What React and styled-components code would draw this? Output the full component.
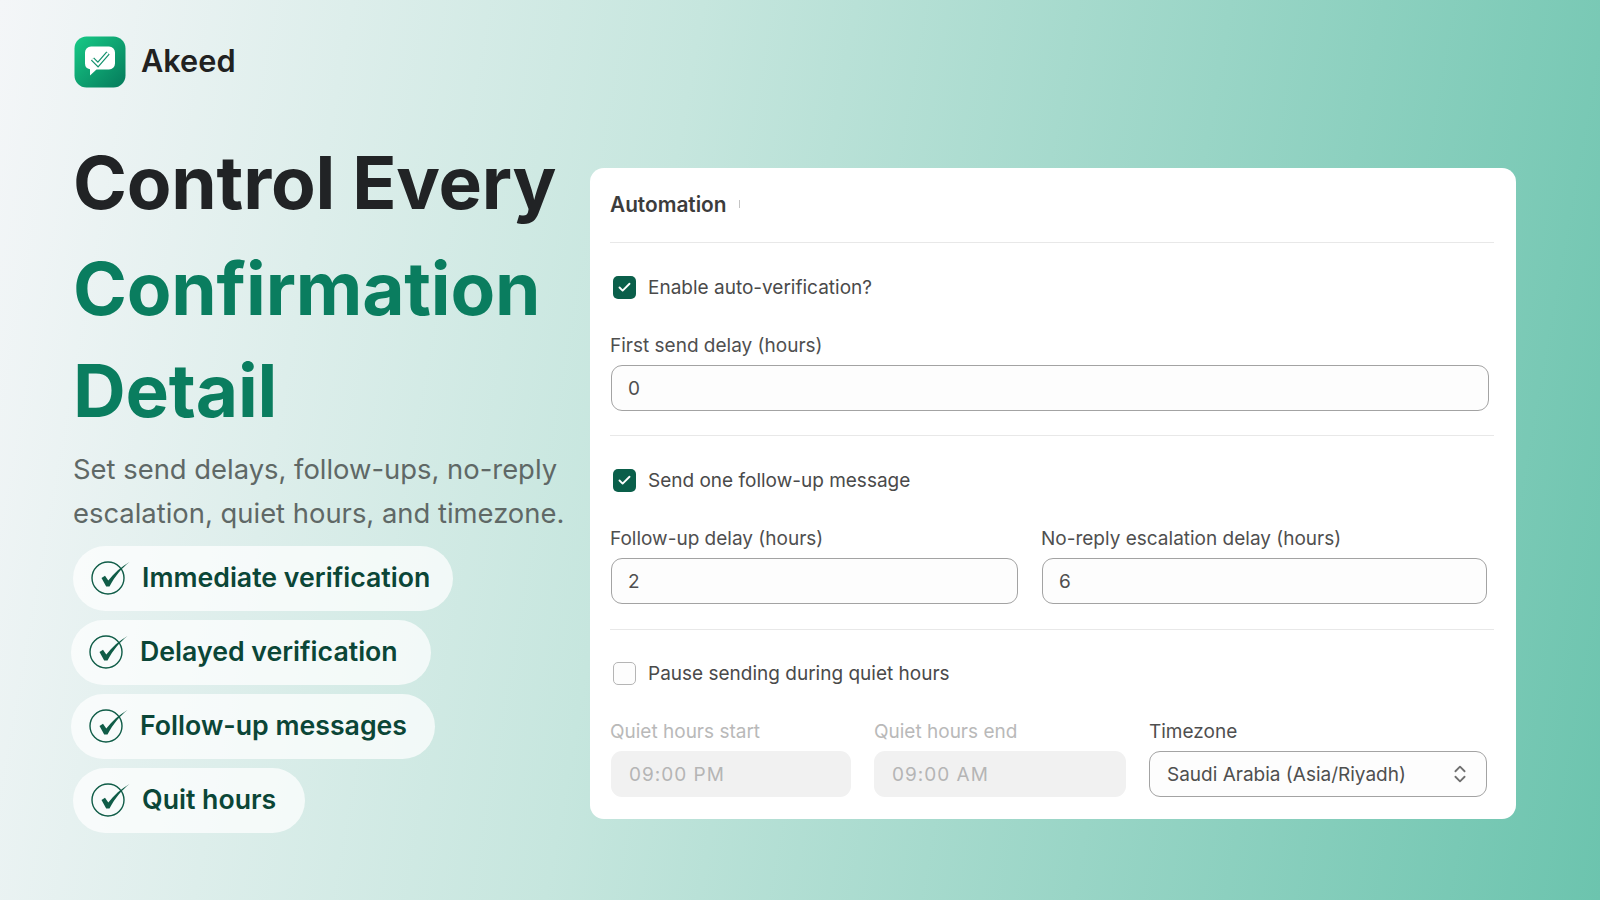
import React from 'react'
import styled, { createGlobalStyle } from 'styled-components'
import { Check, ChevronsUpDown } from 'lucide-react'

const Global = createGlobalStyle`
  html, body { margin: 0; padding: 0; }
  body { font-family: Inter, "Liberation Sans", sans-serif; overflow: hidden; }
`

const Page = styled.div`
  width: 1600px;
  height: 900px;
  display: flex;
  box-sizing: border-box;
  padding: 36px 0 0 0;
  background: linear-gradient(100deg, #f4f6f8 0%, #c6e6de 40%, #6cc4ae 100%);
`

const Left = styled.div`
  width: 590px;
  flex: none;
  padding-left: 73px;
  box-sizing: border-box;
`

const Brand = styled.div`
  display: flex;
  align-items: center;
  gap: 15px;
  height: 52px;
  margin-left: 1px;
  font-size: 30.7px;
  font-weight: 600;
  color: #212121;
`

const BrandName = styled.span`
  margin-bottom: 3px;
`

const Title = styled.h1`
  margin: 43px 0 0;
  font-size: 73px;
  font-weight: 700;
  line-height: 104px;
  color: #212325;
  letter-spacing: -0.2px;
  white-space: nowrap;
`

const Green = styled.span`
  display: block;
  margin-top: ${p => p.$nudge}px;
  color: #0a7d5f;
`

const Sub = styled.p`
  margin: 4px 0 0;
  font-size: 27.4px;
  line-height: 44px;
  color: #5f6866;
  white-space: nowrap;
`

const Pills = styled.div`
  margin-top: 11px;
  display: flex;
  flex-direction: column;
  align-items: flex-start;
  gap: 9px;
`

const Pill = styled.div`
  display: flex;
  align-items: center;
  gap: 11px;
  height: 65px;
  box-sizing: border-box;
  padding: 0 ${p => p.$right}px 3px 18px;
  margin-left: ${p => p.$shift || 0}px;
  border-radius: 33px;
  background: rgba(255, 255, 255, 0.72);
  font-size: 26.7px;
  font-weight: 600;
  color: #0b4637;
`

const Card = styled.section`
  width: 926px;
  height: 651px;
  flex: none;
  margin-top: 132px;
  box-sizing: border-box;
  padding: 0 22px 0 20px;
  background: #fff;
  border-radius: 14px;
`

const CardHead = styled.div`
  height: 75px;
  display: flex;
  align-items: center;
  gap: 12px;
  box-sizing: border-box;
  padding-bottom: 2px;
  border-bottom: 1px solid #e8e8e8;
  font-size: 20.8px;
  font-weight: 600;
  color: #3c3c3c;
`

const Tick = styled.span`
  width: 1px;
  height: 8px;
  background: #c4c4c4;
`

const Group = styled.div`
  padding-top: ${p => p.$top}px;
  height: ${p => p.$h}px;
  box-sizing: border-box;
  border-bottom: ${p => (p.$last ? 'none' : '1px solid #e8e8e8')};
`

const CheckRow = styled.div`
  display: flex;
  align-items: center;
  gap: 12px;
  padding-left: 3px;
  height: 23px;
  font-size: 19px;
  color: #4a4a4a;
`

const Box = styled.span`
  width: 23px;
  height: 23px;
  flex: none;
  box-sizing: border-box;
  display: flex;
  align-items: center;
  justify-content: center;
  border-radius: 5px;
  color: #fff;
  background: ${p => (p.$on ? '#0a5f4a' : '#fdfdfd')};
  border: ${p => (p.$on ? 'none' : '1.5px solid #b5b5b5')};
`

const Fields = styled.div`
  margin-top: 35px;
  display: flex;
  gap: 23px;
`

const Field = styled.div`
  width: ${p => p.$w}px;
  flex: none;
`

const Label = styled.div`
  height: 24px;
  line-height: 24px;
  margin-bottom: 7px;
  font-size: 19px;
  color: ${p => (p.$off ? '#b9b9b9' : '#4f4f4f')};
  white-space: nowrap;
`

const Input = styled.div`
  height: 46px;
  box-sizing: border-box;
  display: flex;
  align-items: center;
  justify-content: space-between;
  margin-left: ${p => (p.$inset ? 1 : 0)}px;
  padding: 0 15px 0 ${p => (p.$off ? 18 : p.$inset ? 16 : 17)}px;
  border-radius: 11px;
  font-size: 19px;
  white-space: nowrap;
  color: ${p => (p.$off ? '#b5b5b5' : '#4f4f4f')};
  background: ${p => (p.$off ? '#f1f1f1' : '#fdfdfd')};
  border: ${p => (p.$off ? 'none' : '1.5px solid #a3a3a3')};
  letter-spacing: ${p => (p.$off ? '1px' : '0')};
`

const Logo = () => (
  <svg width="52" height="52" viewBox="0 0 52 52">
    <defs>
      <linearGradient id="logoFill" x1="0" y1="0" x2="1" y2="1">
        <stop offset="0" stopColor="#17ca86" />
        <stop offset="1" stopColor="#057a5b" />
      </linearGradient>
    </defs>
    <rect x="0.5" y="0.5" width="51" height="51" rx="12" fill="url(#logoFill)" />
    <path d="M17 10.5h18a6 6 0 0 1 6 6v11a6 6 0 0 1-6 6H22.5l-6.5 6v-6.2a6 6 0 0 1-5-5.8v-11a6 6 0 0 1 6-6z" fill="#fff" />
    <path d="M18.5 23l5.5 5.5 10-11.5" fill="none" stroke="#12906c" strokeWidth="4.4" strokeLinejoin="miter" />
    <path d="M18.5 23l5.5 5.5 10-11.5" fill="none" stroke="#fff" strokeWidth="2" strokeLinejoin="miter" />
  </svg>
)

const CircleCheck = () => (
  <svg width="40" height="36" viewBox="0 0 40 36" style={{ flex: 'none' }}>
    <circle cx="17" cy="19" r="16" fill="none" stroke="#0f5c47" strokeWidth="1.4" />
    <path d="M10.5 19L14 16.7l3.3 4.8C23 14 30 8 38.5 3 31 9 24 17 18.5 27.5h-3.3z" fill="#0f5c47" />
  </svg>
)

const pills = [
  ['Immediate verification', 0, 23],
  ['Delayed verification', -2, 33],
  ['Follow-up messages', -2, 28],
  ['Quit hours', 0, 29],
]

const App = () => (
  <Page>
    <Global />
    <Left>
      <Brand><Logo /><BrandName>Akeed</BrandName></Brand>
      <Title>
        Control Every
        <Green $nudge={2}>Confirmation</Green>
        <Green $nudge={-2}>Detail</Green>
      </Title>
      <Sub>
        Set send delays, follow-ups, no-reply<br />
        escalation, quiet hours, and timezone.
      </Sub>
      <Pills>
        {pills.map(([text, shift, right]) => (
          <Pill key={text} $shift={shift} $right={right}><CircleCheck />{text}</Pill>
        ))}
      </Pills>
    </Left>
    <Card>
      <CardHead>Automation<Tick /></CardHead>
      <Group $h={193} $top={33}>
        <CheckRow><Box $on><Check size={15} strokeWidth={3} /></Box>Enable auto-verification?</CheckRow>
        <Fields>
          <Field $w={879}>
            <Label>First send delay (hours)</Label>
            <Input $inset>0</Input>
          </Field>
        </Fields>
      </Group>
      <Group $h={194} $top={33}>
        <CheckRow><Box $on><Check size={15} strokeWidth={3} /></Box>Send one follow-up message</CheckRow>
        <Fields>
          <Field $w={408}>
            <Label>Follow-up delay (hours)</Label>
            <Input $inset>2</Input>
          </Field>
          <Field $w={446}>
            <Label>No-reply escalation delay (hours)</Label>
            <Input $inset>6</Input>
          </Field>
        </Fields>
      </Group>
      <Group $h={189} $top={32} $last>
        <CheckRow><Box />Pause sending during quiet hours</CheckRow>
        <Fields>
          <Field $w={241}>
            <Label $off>Quiet hours start</Label>
            <Input $off $inset>09:00 PM</Input>
          </Field>
          <Field $w={252}>
            <Label $off>Quiet hours end</Label>
            <Input $off>09:00 AM</Input>
          </Field>
          <Field $w={338}>
            <Label>Timezone</Label>
            <Input>Saudi Arabia (Asia/Riyadh)<ChevronsUpDown size={22} color="#6f6f6f" /></Input>
          </Field>
        </Fields>
      </Group>
    </Card>
  </Page>
)

export default App
